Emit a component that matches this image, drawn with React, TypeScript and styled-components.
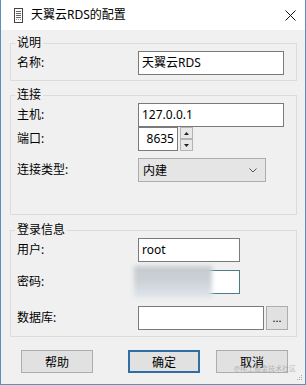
import styled, { createGlobalStyle } from "styled-components";

const GlobalStyle = createGlobalStyle`
  html, body {
    margin: 0;
    padding: 0;
    background: #f0f0f0;
  }
  body {
    font-family: "Noto Sans", "Noto Sans CJK SC", sans-serif;
    font-size: 12px;
    color: #000;
  }
`;

const Window = styled.div`
  position: relative;
  box-sizing: border-box;
  width: 306px;
  height: 385px;
  background-color: #f0f0f0;
  border: 1px solid #5b8fc4;
  border-top: none;
  display: flex;
  flex-direction: column;
  overflow: hidden;
`;

const TitleBar = styled.div`
  display: flex;
  align-items: center;
  height: 30px;
  padding-left: 13px;
  padding-right: 9px;
  background-color: #fff;
  flex-shrink: 0;
`;

const TitleText = styled.span`
  margin-left: 8px;
  font-size: 12px;
  line-height: 14px;
  flex: 1;
`;

const Body = styled.div`
  padding: 6px 8px 0 9px;
  flex: 1;
`;

const Group = styled.fieldset<{ $top?: number; $bottom: number }>`
  margin: ${(p) => p.$top ?? 0}px 0 0 0;
  padding: 1px 0 ${(p) => p.$bottom}px 6px;
  border: 1px solid #dcdcdc;
  min-width: 0;
`;

const Legend = styled.legend`
  padding: 0 2px;
  margin-left: -2px;
  font-size: 12px;
  line-height: 14px;
`;

const Row = styled.div<{ $gap?: number }>`
  position: relative;
  display: flex;
  align-items: center;
  height: 24px;
  margin-top: ${(p) => p.$gap ?? 0}px;
`;

const Label = styled.span`
  width: 121px;
  flex-shrink: 0;
  line-height: 14px;
`;

const TextBox = styled.div<{ $w: number; $align?: string; $border?: string }>`
  box-sizing: border-box;
  width: ${(p) => p.$w}px;
  height: 24px;
  padding: 0 3px;
  background-color: #fff;
  border: 1px solid ${(p) => p.$border ?? "#7a7a7a"};
  line-height: 22px;
  text-align: ${(p) => p.$align ?? "left"};
  white-space: nowrap;
`;

const Spinner = styled.div`
  display: flex;
  flex-direction: column;
  margin-left: 2px;
  height: 24px;
`;

const SpinButton = styled.div`
  box-sizing: border-box;
  width: 13px;
  height: 12px;
  background-color: #e8e8e8;
  border: 1px solid #b4b4b4;
  display: flex;
  align-items: center;
  justify-content: center;
`;

const Combo = styled.div`
  box-sizing: border-box;
  width: 128px;
  height: 24px;
  padding: 0 8px 0 4px;
  background-color: #e5e5e5;
  border: 1px solid #adadad;
  display: flex;
  align-items: center;
  justify-content: space-between;
`;

const BrowseButton = styled.div`
  box-sizing: border-box;
  width: 22px;
  height: 24px;
  margin-left: 2px;
  background-color: #e1e1e1;
  border: 1px solid #adadad;
  display: flex;
  align-items: center;
  justify-content: center;
  font-size: 11px;
  line-height: 1;
  padding-bottom: 2px;
`;

const Blur = styled.div`
  position: absolute;
  left: 117px;
  top: -4px;
  width: 78px;
  height: 32px;
  background: linear-gradient(180deg, #c7cacf 0%, #cdd1d6 45%, #e0e7ee 100%);
  filter: blur(2px);
`;

const ButtonBar = styled.div`
  display: flex;
  align-items: center;
  margin-top: 13px;
  padding: 0 9px 0 11px;
`;

const ButtonGroup = styled.div`
  display: flex;
  gap: 16px;
  margin-left: auto;
`;

const Button = styled.div<{ $primary?: boolean }>`
  box-sizing: border-box;
  width: 72px;
  height: 23px;
  background-color: #e1e1e1;
  border: ${(p) => (p.$primary ? "2px solid #2f6fa6" : "1px solid #adadad")};
  display: flex;
  align-items: center;
  justify-content: center;
  font-size: 12px;
`;

const Watermark = styled.span`
  position: absolute;
  right: 9px;
  bottom: 11px;
  font-size: 7px;
  line-height: 8px;
  color: rgba(140, 140, 140, 0.55);
  white-space: nowrap;
`;

const Grip = styled.svg`
  position: absolute;
  right: 2px;
  bottom: 3px;
`;

const Triangle = ({ up }: { up?: boolean }) => (
  <svg width="5" height="3" viewBox="0 0 5 3">
    <polygon points={up ? "2.5,0 5,3 0,3" : "0,0 5,0 2.5,3"} fill="#222" />
  </svg>
);

export default function App() {
  return (
    <>
      <GlobalStyle />
      <Window>
        <TitleBar>
          <svg width="9" height="15" viewBox="0 0 9 15">
            <rect x="0.5" y="0.5" width="8" height="14" fill="none" stroke="#444" />
            <line x1="2" y1="3.5" x2="7" y2="3.5" stroke="#666" />
            <line x1="2" y1="5.5" x2="7" y2="5.5" stroke="#666" />
            <line x1="2" y1="7.5" x2="7" y2="7.5" stroke="#666" />
            <line x1="2" y1="9.5" x2="7" y2="9.5" stroke="#666" />
            <line x1="2" y1="11.5" x2="7" y2="11.5" stroke="#999" strokeDasharray="1 1" />
          </svg>
          <TitleText>天翼云RDS的配置</TitleText>
          <svg width="11" height="11" viewBox="0 0 11 11">
            <path d="M0.5 0.5 L10.5 10.5 M10.5 0.5 L0.5 10.5" stroke="#111" strokeWidth="1" />
          </svg>
        </TitleBar>
        <Body>
          <Group $bottom={5}>
            <Legend>说明</Legend>
            <Row>
              <Label>名称:</Label>
              <TextBox $w={146}>天翼云RDS</TextBox>
            </Row>
          </Group>
          <Group $top={7} $bottom={32}>
            <Legend>连接</Legend>
            <Row>
              <Label>主机:</Label>
              <TextBox $w={146}>127.0.0.1</TextBox>
            </Row>
            <Row>
              <Label>端口:</Label>
              <TextBox $w={40} $align="right">8635</TextBox>
              <Spinner>
                <SpinButton>
                  <Triangle up />
                </SpinButton>
                <SpinButton>
                  <Triangle />
                </SpinButton>
              </Spinner>
            </Row>
            <Row $gap={7}>
              <Label>连接类型:</Label>
              <Combo>
                <span>内建</span>
                <svg width="8" height="5" viewBox="0 0 8 5">
                  <path d="M0.5 0.5 L4 4 L7.5 0.5" fill="none" stroke="#555" />
                </svg>
              </Combo>
            </Row>
          </Group>
          <Group $top={8} $bottom={6}>
            <Legend>登录信息</Legend>
            <Row>
              <Label>用户:</Label>
              <TextBox $w={102}>root</TextBox>
            </Row>
            <Row $gap={8}>
              <Label>密码:</Label>
              <TextBox $w={102} $border="#4d7a88" />
              <Blur />
            </Row>
            <Row $gap={12}>
              <Label>数据库:</Label>
              <TextBox $w={126} />
              <BrowseButton>...</BrowseButton>
            </Row>
          </Group>
          <ButtonBar>
            <Button>帮助</Button>
            <ButtonGroup>
              <Button $primary>确定</Button>
              <Button>取消</Button>
            </ButtonGroup>
          </ButtonBar>
        </Body>
        <Watermark>@稀土掘金技术社区</Watermark>
        <Grip width="6" height="6" viewBox="0 0 6 6">
          <rect x="4" y="0" width="1" height="1" fill="#aaa" />
          <rect x="2" y="2" width="1" height="1" fill="#aaa" />
          <rect x="4" y="2" width="1" height="1" fill="#aaa" />
          <rect x="0" y="4" width="1" height="1" fill="#aaa" />
          <rect x="2" y="4" width="1" height="1" fill="#aaa" />
          <rect x="4" y="4" width="1" height="1" fill="#aaa" />
        </Grip>
      </Window>
    </>
  );
}
